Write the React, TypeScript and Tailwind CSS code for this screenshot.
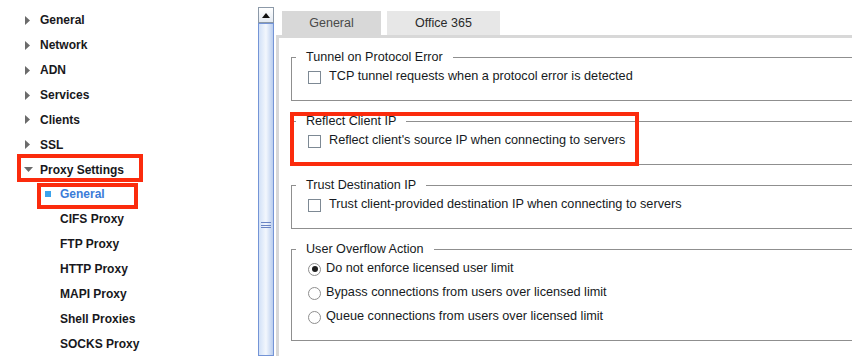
import React from "react";

const font = { fontFamily: '"Liberation Sans", Arial, sans-serif' };

function RightTri() {
  return (
    <svg width="5" height="9" viewBox="0 0 5 9" className="block">
      <polygon points="0,0 5,4.5 0,9" fill="#6b6b6b" />
    </svg>
  );
}
function DownTri() {
  return (
    <svg width="9" height="5" viewBox="0 0 9 5" className="block">
      <polygon points="0,0 9,0 4.5,5" fill="#6b6b6b" />
    </svg>
  );
}

const topItems = ["General", "Network", "ADN", "Services", "Clients", "SSL"];
const children = ["CIFS Proxy", "FTP Proxy", "HTTP Proxy", "MAPI Proxy", "Shell Proxies", "SOCKS Proxy"];

function Tree() {
  return (
    <div className="w-[258px] shrink-0 pt-[8px] flex flex-col">
      {topItems.map((t) => (
        <div key={t} className="h-[25px] flex items-center pl-[25px]">
          <div className="w-[15px]">
            <RightTri />
          </div>
          <span className="text-[12px] font-bold text-[#181820]">{t}</span>
        </div>
      ))}
      <div className="h-[25px] flex items-center pl-[24px]">
        <div className="w-[16px]">
          <DownTri />
        </div>
        <span className="text-[12px] font-bold text-[#181820]">Proxy Settings</span>
      </div>
      <div className="h-[25px] flex items-center pl-[45px]">
        <div className="w-[15px]">
          <div className="w-[6px] h-[6px] bg-[#3ba3ec]" />
        </div>
        <span className="text-[12px] font-bold text-[#3b7cd8]">General</span>
      </div>
      {children.map((t) => (
        <div key={t} className="h-[25px] flex items-center pl-[60px]">
          <span className="text-[12px] font-bold text-[#181820]">{t}</span>
        </div>
      ))}
    </div>
  );
}

function Scrollbar() {
  return (
    <div className="w-[16px] shrink-0 pt-[7px] flex flex-col">
      <div className="h-[16px] border border-[#8c99a8] bg-gradient-to-b from-[#ffffff] to-[#e4eaf2] flex items-center justify-center">
        <svg width="8" height="5" viewBox="0 0 8 5" className="block">
          <polygon points="0,5 8,5 4,0" fill="#111" />
        </svg>
      </div>
      <div className="flex-1 border border-[#7494d6] bg-gradient-to-r from-[#d2e1f7] via-[#f3f7fd] to-[#b9cdee] flex flex-col items-center pt-[198px]">
        <div className="w-[10px] flex flex-col gap-[1.5px]">
          <div className="h-[1px] bg-[#6a84c4]" />
          <div className="h-[1px] bg-[#6a84c4]" />
          <div className="h-[1px] bg-[#6a84c4]" />
        </div>
      </div>
    </div>
  );
}

function CheckRow({ label }: { label: string }) {
  return (
    <div className="h-[24px] flex items-center pl-[16px]">
      <div className="w-[13px] h-[13px] border border-[#7d8994] bg-white shrink-0" />
      <span className="ml-[8px] text-[12.7px] text-[#161a22] whitespace-nowrap">{label}</span>
    </div>
  );
}

function RadioRow({ label, checked }: { label: string; checked?: boolean }) {
  return (
    <div className="h-[24px] flex items-center pl-[16px]">
      <div className="w-[13px] h-[13px] rounded-full border border-[#8e8e8e] bg-white shrink-0 flex items-center justify-center">
        {checked && <div className="w-[6px] h-[6px] rounded-full bg-[#1e1e1e]" />}
      </div>
      <span className="ml-[5px] text-[12.7px] text-[#161a22] whitespace-nowrap">{label}</span>
    </div>
  );
}

function Group({ title, children, h }: { title: string; children: React.ReactNode; h: string }) {
  return (
    <fieldset className="w-[620px] shrink-0 border border-[#8f8f8f] m-0 p-0">
      <legend className="ml-[4px] px-[10px] leading-[16px] text-[12.6px] text-[#161a22]">{title}</legend>
      <div className={h}>{children}</div>
    </fieldset>
  );
}

export default function App() {
  return (
    <div className="relative w-[852px] h-[356px] overflow-hidden bg-white flex" style={font}>
      <Tree />
      <Scrollbar />
      <div className="w-[2px] shrink-0" />
      <div className="flex-1 flex flex-col min-w-0">
        <div className="h-[35px] pt-[11px] pl-[6px] flex gap-[6px]">
          <div className="w-[99px] h-[24px] bg-[#d8d8d8] flex items-center justify-center text-[12.5px] text-[#4a4a4a]">
            General
          </div>
          <div className="w-[113px] h-[24px] bg-[#e7e7e7] flex items-center justify-center text-[12.5px] text-[#2a2a2a]">
            Office 365
          </div>
        </div>
        <div className="flex-1 border-l-[3px] border-t-[3px] border-[#d8d8d8] pt-[11px] pl-[12px] flex flex-col gap-[12px] overflow-hidden">
          <Group title="Tunnel on Protocol Error" h="h-[35px]">
            <CheckRow label="TCP tunnel requests when a protocol error is detected" />
          </Group>
          <Group title="Reflect Client IP" h="h-[35px]">
            <CheckRow label="Reflect client's source IP when connecting to servers" />
          </Group>
          <Group title="Trust Destination IP" h="h-[35px]">
            <CheckRow label="Trust client-provided destination IP when connecting to servers" />
          </Group>
          <Group title="User Overflow Action" h="h-[83px]">
            <RadioRow label="Do not enforce licensed user limit" checked />
            <RadioRow label="Bypass connections from users over licensed limit" />
            <RadioRow label="Queue connections from users over licensed limit" />
          </Group>
        </div>
      </div>

      {/* annotation boxes */}
      <div className="absolute left-[17px] top-[154px] w-[126px] h-[28px] border-[4px] border-[#fb2b0d]" />
      <div className="absolute left-[37px] top-[183px] w-[101px] h-[26px] border-[4px] border-[#fb2b0d]" />
      <div className="absolute left-[290px] top-[112px] w-[349px] h-[54px] border-[4px] border-[#fb2b0d]" />
    </div>
  );
}
